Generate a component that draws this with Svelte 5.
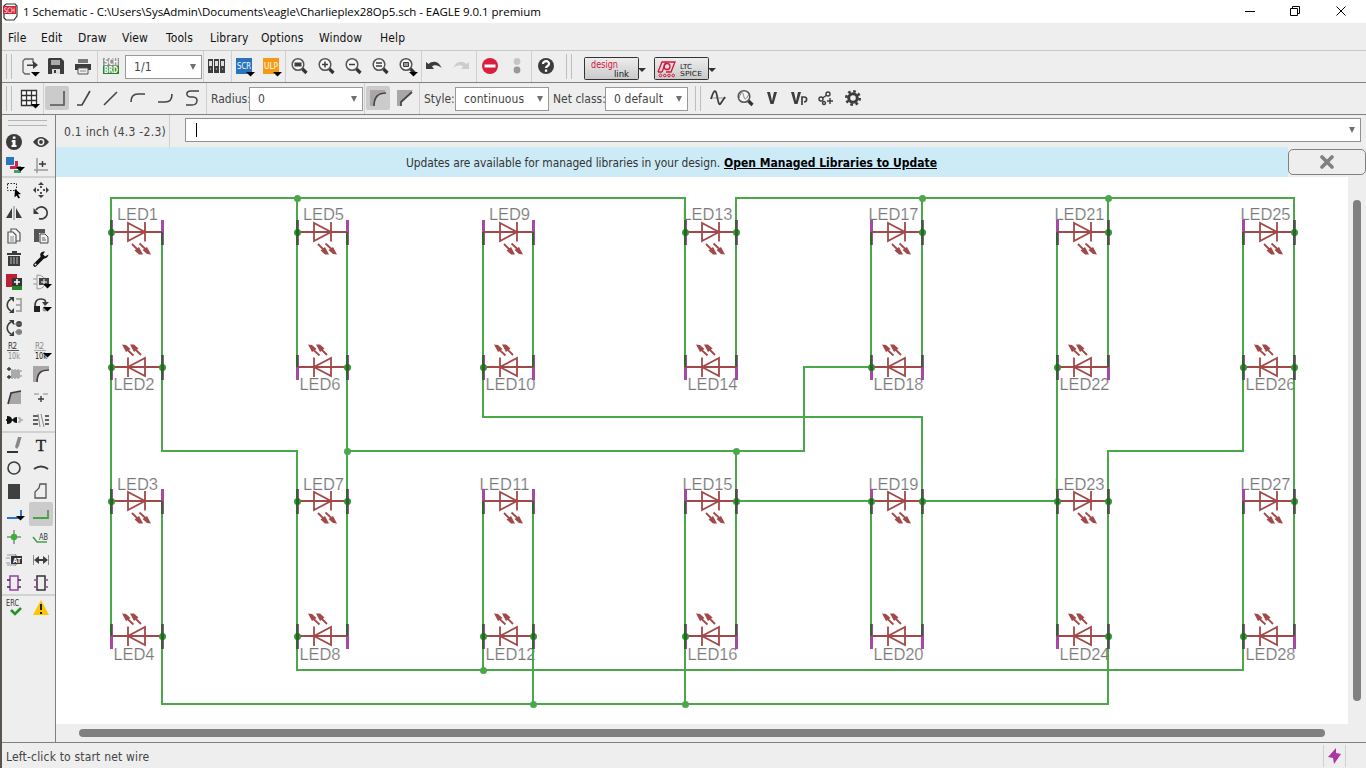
<script>
  const menus = [['File', 8, 17], ['Edit', 41, 21], ['Draw', 78, 27], ['View', 122, 27], ['Tools', 166, 29], ['Library', 210, 35], ['Options', 261, 43], ['Window', 319, 45], ['Help', 380, 24]];

  const arrow = '<path d="M-4 0h9l-4.5 4.500z" fill="#000"/>';
  const drop = (x, y) => `<g transform="translate(${x} ${y})">${arrow}</g>`;
  const lens = (inner) => `<circle cx="-1" cy="-1.500" r="5.800" fill="#f6f6f6" stroke="#555" stroke-width="1.500"/><path d="M3.500 3l4 4" stroke="#333" stroke-width="3.200"/>${inner}`;
  const K = '#3c3c3c';
  const tiny = 'font-family="DejaVu Sans Condensed" lengthAdjust="spacingAndGlyphs"';

  const icons = {
    export: `<path d="M3-3v-4h-8l-2 2v11l2 2h5" fill="none" stroke="#666" stroke-width="1.300"/><path d="M-3-1.500h6v-3.500l5 4-5 4v-3h-6z" fill="${K}"/>${drop(5, 6)}`,
    save: `<path d="M-7-8h12l3 3v13h-16v-15z" fill="${K}"/><path d="M-5-6h9v5h-9z" fill="#aaa"/><path d="M-4 3h8v5h-8z" fill="#ddd"/><path d="M-2 4h2v3h-2z" fill="${K}"/>`,
    print: `<path d="M-5-7h10v4h-10z" fill="#777"/><path d="M-8-2h16v6h-16z" fill="${K}"/><path d="M-5 2h10v6h-10z" fill="#eee" stroke="#555"/><path d="M-3 5h6" stroke="#888"/>`,
    schbrd: `<path d="M-8-8h16v8h-16z" fill="#8e918e"/><path d="M-8 0h16v8h-16z" fill="#278327"/><g fill="#fff" font-family="DejaVu Sans Condensed" font-size="8" font-weight="700"><text x="-7" y="-1.200" textLength="14" lengthAdjust="spacingAndGlyphs">SCH</text><text x="-7" y="7" textLength="14" lengthAdjust="spacingAndGlyphs">BRD</text></g>`,
    sheets: `<g fill="${K}"><path d="M-8-7h5v14h-5zM-2-7h5v14h-5zM4-7h5v14h-5z"/></g><g fill="#ddd"><path d="M-7-5h3v5h-3zM-1-5h3v5h-3zM5-5h3v5h-3z"/></g><path d="M-6 3h1M0 3h1M6 3h1" stroke="#ddd"/>`,
    scr: `<path d="M-8-8h16v16h-16z" fill="#2a74bd"/><text x="-7" y="3" textLength="14" ${tiny} font-size="9" fill="#fff">SCR</text>${drop(6, 6)}`,
    ulp: `<path d="M-8-8h16v16h-16z" fill="#f69a16"/><text x="-7" y="3" textLength="14" ${tiny} font-size="9" fill="#fff">ULP</text>${drop(6, 6)}`,
    fit: lens(`<path d="M-4.500-3.500h7v4h-7z" fill="${K}"/>`),
    zin: lens(`<path d="M-4-1.500h6M-1-4.500v6" stroke="${K}" stroke-width="1.500"/>`),
    zout: lens(`<path d="M-4-1.500h6" stroke="${K}" stroke-width="1.500"/>`),
    redraw: lens(`<path d="M-4-3h6M-4 0h6" stroke="${K}" stroke-width="1.500"/>`),
    zsel: lens(`<path d="M-3.500-3.500h5v4h-5z" fill="#999" stroke="${K}"/>`) + drop(6, 6),
    undo: `<path d="M-8 3V-4l2.500 2C-1-6 5-5 7.500 2 4-1.500 0-1.500-2 .5L0 3z" fill="${K}"/>`,
    redo: `<path d="M8 3V-4L5.500-2C1-6-5-5-7.500 2-4-1.500 0-1.500 2 .5L0 3z" fill="#ccc"/>`,
    stop: `<circle r="8" fill="#d91f3d"/><path d="M-5.500-1.500h11v3h-11z" fill="#fff"/>`,
    go: `<circle cy="-4.500" r="3.400" fill="#c5c5c5"/><circle cy="4" r="3.400" fill="#999"/>`,
    help: `<circle r="8" fill="${K}"/><path d="M-3-2C-3-6 3.500-5.500 3-2 3 0 0 0 0 2" fill="none" stroke="#fff" stroke-width="2.200"/><path d="M-1.100 3.500h2.300v2.300h-2.300z" fill="#fff"/>`,
    grid: `<path d="M-7.500-7.500h15v15h-15zM-7.500-2.500h15M-7.500 2.500h15M-2.500-7.500v15M2.500-7.500v15" fill="#fff" stroke="#333" stroke-width="1.300"/>${drop(6, 6)}`,
    w1: `<path d="M-7 7h14v-14" fill="none" stroke="#555" stroke-width="1.600"/>`,
    w2: `<path d="M-7 7h5l8-14" fill="none" stroke="#444" stroke-width="1.600"/>`,
    w3: `<path d="M-7 7l13-13" stroke="#444" stroke-width="1.600"/>`,
    w4: `<path d="M-7 4C-7-2-4-4 0-4h7" fill="none" stroke="#444" stroke-width="1.600"/>`,
    w5: `<path d="M-7 4h7C5 4 7 2 7-4" fill="none" stroke="#444" stroke-width="1.600"/>`,
    w6: `<path d="M7-7H-1C-7-7-6-1-1-1h2C7-1 6 7 0 7h-6" fill="none" stroke="#444" stroke-width="1.500"/>`,
    round: `<path d="M-8-8h15v2C0-5-5-1-5 8h-3z" fill="#aaa6a6"/><path d="M-4 8C-4-1 0-5 8-5" fill="none" stroke="#444" stroke-width="1.700"/>`,
    bevel: `<path d="M-8-8H8L-4 4v4h-4z" fill="#aaa6a6"/><path d="M-4 8V4L7-6" fill="none" stroke="#444" stroke-width="1.700"/>`,
    sine: `<path d="M-8 0h16" stroke="#999"/><path d="M-7 1C-4-9-2-9-1-2 0 3 1 9 3 5L7-1" fill="none" stroke="${K}" stroke-width="1.700"/>`,
    probe: lens(`<path d="M-6 0C-3-9-2-5-1-1 0 3 2 0 4-4" fill="none" stroke="#777"/>`),
    vv: `<path d="M-5-6h3L0 3l2-9h3L1.500 6h-3z" fill="${K}"/>`,
    vp: `<path d="M-8-6h3L-3 3l2-9h3L-1.500 6h-3z" fill="${K}"/><path d="M3 7v-8h2c4 0 3 5 0 5" fill="none" stroke="${K}" stroke-width="1.700"/>`,
    nodes: `<g fill="none" stroke="${K}" stroke-width="1.400"><circle cx="2" cy="-4" r="2"/><circle cx="-5" cy="1" r="2"/><circle cx="-2" cy="5" r="1.500"/><path d="M-3.500 0L1-3M1 3h6M4 0v6"/></g>`,
    gear: `<circle r="4.300" fill="none" stroke="${K}" stroke-width="3"/><circle r="6.700" fill="none" stroke="${K}" stroke-width="2.600" stroke-dasharray="2.630 2.630"/>`,

    info: `<circle r="8" fill="${K}"/><path d="M-2-2h3.500v5h1v2h-5v-2h1v-3h-1zM-1.200-5.500h2.700v2.300h-2.700z" fill="#fff"/>`,
    eye: `<path d="M-8 0Q0-10 8 0 0 10-8 0z" fill="${K}"/><circle r="3.400" fill="#eee"/><circle r="1.900" fill="${K}"/>`,
    layers: `<path d="M-8-8h8v8h-8z" fill="#2877bd"/><path d="M1-4h3v8h-8V1h5z" fill="#d2204f"/><path d="M4 1h3v7H0V5h4z" fill="#35a568"/>${drop(6, 2)}`,
    mark: `<path d="M-7 5H7M-4-7V8" stroke="#999" stroke-width="1.500"/><path d="M-2-1h7M1.500-4v6" stroke="${K}" stroke-width="1.500"/>`,
    group: `<path d="M-6.500-6.500h9v7h-9z" fill="none" stroke="#222" stroke-dasharray="1.500 1.500"/><path d="M1-1l6 5-3 .500 2 3-1.500 1-2-3-2 2z" fill="#000"/>`,
    move: `<g fill="${K}"><path d="M0-8l3 3h-6zM0 8l3-3h-6zM-8 0l3-3v6zM8 0l-3-3v6z"/></g><path d="M0-4v2M0 4v-2M-4 0h2M4 0h-2" stroke="#222" stroke-width="1.500"/>`,
    mirror: `<path d="M-2-5v10h-6zM2-5v10h6z" fill="${K}"/><path d="M0-7V7" stroke="#aaa" stroke-width="1.600"/>`,
    rotate: `<path d="M-5-3A6 6 0 1 1-2 5.500" fill="none" stroke="${K}" stroke-width="1.700"/><path d="M-7.500-5v6h5.500z" fill="${K}"/>`,
    copy: `<g fill="#f4f4f4" stroke="#555" stroke-width="1.200"><path d="M-3-7h5l4 4v8h-9z"/><path d="M-6-4h5l3 3v8h-8z"/></g><path d="M-4 1h4M-4 3h4M-4 5h4" stroke="#888"/>`,
    paste: `<path d="M-7-7h11v4h-6v9h-5z" fill="#555"/><path d="M-1-2h5l3 3v6h-8z" fill="#eee" stroke="#444"/><path d="M1 2h3M1 4h4" stroke="#666"/>`,
    trash: `<path d="M-7-6h14v2H-7zM-2-8h5v2h-5zM-6-3H6v10H-6z" fill="${K}"/><path d="M-3-2v7M0-2v7M3-2v7" stroke="#bbb"/>`,
    wrench: `<path d="M-6 6L2-2" stroke="#111" stroke-width="3.600" stroke-linecap="round"/><path d="M7.500-4.500C7-1 3 1 0-1.500-2-5 0-8 4-7.500L2-4.500l2 2z" fill="#111"/><circle cx="-5.500" cy="5.500" r="1" fill="#eee"/>`,
    add: `<path d="M-8-8h11v13H-8z" fill="#bd2034"/><path d="M-2 0H8v8H-2z" fill="#278327"/><path d="M-2-4H8v8H-2z" fill="#333"/><path d="M0 0h6M3-3v6" stroke="#fff" stroke-width="1.500"/>`,
    addgate: `<path d="M-8-3h4M-8 2h4M-4-7v14Q4 7 4 0T-4-7" fill="none" stroke="#999"/><path d="M-2-4H8v7H-2z" fill="#444"/><path d="M0 0h6M3-3v6" stroke="#fff"/>${drop(6, 2)}`,
    pins: `<path d="M7-7v14M2-6h5M2 0h5M2 6h5" fill="none" stroke="#999" stroke-width="1.500"/><path d="M-3-6C-8-3-8 3-3 6" fill="none" stroke="${K}" stroke-width="1.600"/><path d="M-5-8h5v5zM-5 8h5V3z" fill="${K}"/>`,
    gates: `<path d="M-6 1Q-6-6 0-6t4 5" fill="none" stroke="${K}" stroke-width="1.700"/><path d="M1-3h7L4 1z" fill="${K}"/><path d="M-7 1h6v6h-6z" fill="#222"/><circle cx="4" cy="4" r="2.500" fill="#999"/>${drop(6, 2)}`,
    swap: `<path d="M-3-6C-8-3-8 3-3 6" fill="none" stroke="${K}" stroke-width="1.600"/><path d="M-5-8h5v5zM-5 8h5V3z" fill="${K}"/><circle cx="5" cy="-4" r="3" fill="#444"/><circle cx="5" cy="4" r="3" fill="#888"/><path d="M0-4h8M1 4h7" stroke="#777"/>`,
    name: `<path d="M-7-.5h12" stroke="#555"/><g font-family="DejaVu Sans Condensed" font-size="8"><text x="-6" y="-2" fill="#333" textLength="9">R2</text><text x="-6" y="8" fill="#888" textLength="12" lengthAdjust="spacingAndGlyphs">10k</text></g>`,
    value: `<path d="M-7-.5h12" stroke="#aaa"/><g font-family="DejaVu Sans Condensed" font-size="8"><text x="-6" y="-2" fill="#888" textLength="9">R2</text><text x="-6" y="8" fill="#111" textLength="12" lengthAdjust="spacingAndGlyphs">10k</text></g>${drop(6, 2)}`,
    smash: `<path d="M-3-4H6v8h-9z" fill="#aaa"/><path d="M-2-5v10M1-5v10M4-5v10M6-3h2M6 2h2" stroke="#aaa" stroke-width="1.500"/><path d="M-7-5h4M-5-7v4M-7 3h4M-5 1v4" stroke="#333" stroke-width="1.300"/>`,
    miter: `<path d="M-8-8H8v3C1-5-5-1-5 8h-3z" fill="#aaa6a6"/><path d="M-4 8C-4-1 0-4 8-4" fill="none" stroke="${K}" stroke-width="1.700"/>`,
    split: `<path d="M-6 7l3-11L7-6v13z" fill="#aaa6a6"/><path d="M-6 7l3-11L7-6" fill="none" stroke="${K}" stroke-width="1.700"/>`,
    optimize: `<path d="M-7-3h5M2-3h5" stroke="#aaa" stroke-width="1.400"/><path d="M-3 2h6M0-1v6" stroke="${K}" stroke-width="1.400"/>`,
    invoke: `<path d="M-7-4q5 0 5 4 0 4-5 4z" fill="#111"/><path d="M-8 0H3" stroke="#111" stroke-width="1.700"/><path d="M3-3v6q-4 0-4-3t4-3" fill="#111"/><path d="M4-2h2v4h-2M6 0h3" fill="none" stroke="#aaa" stroke-width="1.500"/>`,
    brk: `<path d="M-8-4h5M-8 0h5M-8 4h5M4-4h4M4 0h4M4 4h4" stroke="#333" stroke-width="1.400"/><path d="M-3-6l2 13M0-6l3 13" stroke="#888"/>`,
    line: `<path d="M-7 7H4" stroke="#111" stroke-width="1.700"/><path d="M4-8h3.500L5 1 3 4 1 2z" fill="#888"/>`,
    text: `<text y="6" text-anchor="middle" font-family="Liberation Serif" font-size="17" fill="#222" stroke="#222" stroke-width=".300">T</text>`,
    circle: `<circle r="6" fill="none" stroke="${K}" stroke-width="1.600"/>`,
    arc: `<path d="M-7 1Q0-4 7 1" fill="none" stroke="${K}" stroke-width="2"/>`,
    rect: `<path d="M-6-7H6V8H-6z" fill="#404040"/>`,
    poly: `<path d="M-1-7H5V7H-6V1L-2-3z" fill="none" stroke="#555" stroke-width="1.300"/>`,
    bus: `<path d="M-7 4H7V-4" fill="none" stroke="#2675c6" stroke-width="1.900"/>${drop(6, 2)}`,
    net: `<path d="M-8 4H7V-4" fill="none" stroke="#43a443" stroke-width="1.800"/>`,
    junction: `<path d="M-7 0H7M0-7V7" stroke="#888" stroke-width="1.500"/><circle r="3.200" fill="#35b335"/>`,
    label: `<path d="M-8 0l4 5H6" fill="none" stroke="#43a443" stroke-width="1.600"/><text x="-2" y="3" ${tiny} font-size="8.500" fill="#333" textLength="9">AB</text>`,
    attr: `<path d="M-7-5h9v10h-9M-8-2h4M-8 3h4M1-6q6 6 0 12" fill="none" stroke="#999"/><path d="M-3-4H8v8H-3z" fill="#333"/><text x="-1" y="3" ${tiny} textLength="8" font-weight="700" font-size="7" fill="#fff">AT</text>`,
    dim: `<path d="M-7.500-5V5M7.500-5V5" stroke="#888"/><path d="M-5 0H5" stroke="${K}" stroke-width="2"/><path d="M-7 0l5-4v8zM7 0l-5-4v8z" fill="${K}"/>`,
    mod: `<path d="M-4-7H4V7H-4z" fill="none" stroke="#9a3fa5" stroke-width="1.500"/><path d="M-7-3h3M-7 4h3M4-3h3M4 4h3" stroke="#333" stroke-width="1.300"/>`,
    port: `<path d="M-4-7H4V7H-4z" fill="none" stroke="#333" stroke-width="1.500"/><path d="M-7-3h3M-7 4h3M4-3h3M4 4h3" stroke="#9a3fa5" stroke-width="1.300"/>`,
    erc: `<text x="-8" y="-2" ${tiny} font-size="8.500" fill="#333" textLength="13">ERC</text><path d="M-3 2l4 4 6-6" fill="none" stroke="#279327" stroke-width="2.600"/>`,
    warn: `<path d="M0-8L8 7H-8z" fill="#ffc400"/><path d="M0-4v6M0 4v2" stroke="#222" stroke-width="2"/>`
  };

  const flow = (items, start) => {
    let end = start;
    return items.map((i) => {
      const w = { icon: 24, sep: 1, grip: 6 }[i[0]] ?? i[3];
      const gap = i[1] - end;
      end = i[1] + w;
      return { kind: i[0], gap, w, v: i[2] };
    });
  };
  const icon = (center, name) => ['icon', center - 12, name];

  const bar1 = flow([['grip', 6], icon(30, 'export'), icon(56, 'save'), icon(83, 'print'), ['sep', 97], icon(111, 'schbrd'), ['combo', 125, '1/1', 77], ['sep', 203], icon(216, 'sheets'), ['sep', 231], icon(244, 'scr'), icon(271, 'ulp'), ['sep', 285], icon(299, 'fit'), icon(326, 'zin'), icon(353, 'zout'), icon(380, 'redraw'), icon(407, 'zsel'), ['sep', 421], icon(434, 'undo'), icon(461, 'redo'), ['sep', 476], icon(490, 'stop'), icon(517, 'go'), ['sep', 531], icon(546, 'help'), ['grip', 566], ['design', 584, '', 62], ['spice', 654, '', 62]], 2);
  const bar2 = flow([['grip', 6], icon(29, 'grid'), ['sep', 43], icon(57, 'w1'), icon(84, 'w2'), icon(111, 'w3'), icon(138, 'w4'), icon(165, 'w5'), icon(192, 'w6'), ['sep', 206], ['text', 211, 'Radius:', 38], ['combo', 249, '0', 114], ['sep', 364], icon(378, 'round'), icon(405, 'bevel'), ['sep', 419], ['text', 424, 'Style:', 31], ['combo', 455, 'continuous', 94], ['text', 553, 'Net class:', 52], ['combo', 605, '0 default', 83], ['grip', 695], icon(718, 'sine'), icon(745, 'probe'), icon(772, 'vv'), icon(799, 'vp'), icon(826, 'nodes'), icon(853, 'gear')], 2);

  const palette = [
    ['info', 'eye', 'layers', 'mark'],
    ['group', 'move', 'mirror', 'rotate', 'copy', 'paste', 'trash', 'wrench', 'add', 'addgate', 'pins', 'gates', 'swap', '', 'name', 'value', 'smash', 'miter', 'split', 'optimize', 'invoke', 'brk'],
    ['line', 'text', 'circle', 'arc', 'rect', 'poly', 'bus', 'net', 'junction', 'label', 'attr', 'dim', 'mod', 'port'],
    ['erc', 'warn']
  ];
  const active = ['w1', 'round', 'net'];

  const cols = [[111, 162], [297, 347], [483, 533], [685, 736], [871, 922], [1057, 1108], [1243, 1294]];
  const rows = [232, 367, 501, 636];
  const leds = cols.flatMap(([l, r], c) =>
    rows.map((y, i) => {
      const n = c * 4 + i + 1;
      const up = i % 2 === 1;
      const two = n > 9;
      return { n, l, r, y, up, tx: up ? l + 2.5 : two ? r - 53.5 : l + 6, ty: [220, 390, 490, 660][i], tl: two ? 50 : 41 };
    })
  );
  const wires = 'M111 636V198H685V367M297 198V367M162 232V451H297V670H1243V501M347 232V636M347 451H804V367H871M736 451V636M736 501H871M922 501H1057M483 232V417H922V636M533 232V367M483 501V670M533 501V704M162 501V704H1108V451H1243V232M685 501V704M736 367V198H1294V636M871 232V367M922 198V367M1108 198V367M1057 232V636M871 501V636';
  const nodes = [[297, 198], [922, 198], [1108, 198], [347, 451], [736, 451], [483, 670], [533, 704], [685, 704]];
  const pinNodes = [[111, 232], [111, 367], [162, 367], [111, 501], [162, 636], [297, 232], [347, 367], [297, 501], [347, 501], [297, 636], [483, 367], [483, 636], [533, 636], [685, 232], [736, 232], [736, 501], [685, 636], [922, 232], [871, 367], [871, 501], [922, 501], [1108, 232], [1057, 367], [1057, 501], [1108, 501], [1108, 636], [1294, 232], [1243, 367], [1294, 367], [1294, 501], [1243, 636]];
</script>

{#snippet glyph(name)}
  <svg class="icon" class:active={active.includes(name)} viewBox="-12 -12 24 24">{@html icons[name] ?? ''}</svg>
{/snippet}

{#snippet toolbar(items)}
  <div class="toolbar">
    {#each items as it}
      <div class="item {it.kind}" style="margin-left:{it.gap}px;width:{it.w}px">
        {#if it.kind === 'icon'}
          {@render glyph(it.v)}
        {:else if it.kind === 'combo'}
          <span>{it.v}</span><i class="caret"></i>
        {:else if it.kind === 'text'}
          {it.v}
        {:else if it.kind === 'design' || it.kind === 'spice'}
          <svg width="62" height="24" viewBox="0 0 62 24">
            <defs><linearGradient id="face" x2="0" y2="1"><stop stop-color="#eee" /><stop offset="1" stop-color="#c9c9c9" /></linearGradient></defs>
            <rect x=".5" y=".5" width="54" height="22" rx="1" fill="url(#face)" stroke="#333" />
            <path d="M54 11h8l-4 4z" fill="#333" />
            {#if it.kind === 'design'}
              <text x="7" y="11" font-size="10" fill="#d8143c" textLength="27" lengthAdjust="spacingAndGlyphs">design</text>
              <text x="30" y="20" font-size="8" fill="#111" textLength="15" lengthAdjust="spacingAndGlyphs">link</text>
            {:else}
              <path d="M4 15L8 5h13l-4 10h-5M8 15l4-10M4 15h4" fill="none" stroke="#d8143c" stroke-width="1.300" />
              <circle cx="13" cy="9.500" r="3" fill="none" stroke="#d8143c" stroke-width="1.300" />
              <g fill="none" stroke="#d8143c"><circle cx="6.500" cy="18.500" r="1.300" /><circle cx="10.800" cy="18.500" r="1.300" /><circle cx="15" cy="18.500" r="1.300" /><circle cx="19.200" cy="18.500" r="1.300" /></g>
              <text x="26" y="11.500" font-size="7" fill="#222" textLength="12" lengthAdjust="spacingAndGlyphs">LTC</text>
              <text x="26" y="19" font-size="7" fill="#222" textLength="22" lengthAdjust="spacingAndGlyphs">SPICE</text>
            {/if}
          </svg>
        {/if}
      </div>
    {/each}
  </div>
{/snippet}

<div class="window">
  <header class="title">
    <svg class="app" width="16" height="18" viewBox="0 0 16 18">
      <path d="M3 1h9l2 2v10l-3 4H3l-2-2V3z" fill="#fff" stroke="#333" stroke-width="1.200" />
      <path d="M0 3h13v8H0z" fill="#d3202f" />
      <text x="1" y="10" font-size="7.500" fill="#fff" textLength="11" lengthAdjust="spacingAndGlyphs">SCH</text>
    </svg>
    <span class="caption">1 Schematic - C:\Users\SysAdmin\Documents\eagle\Charlieplex28Op5.sch - EAGLE 9.0.1 premium</span>
    <svg class="controls" width="110" height="22" viewBox="1240 0 110 22" fill="none" stroke="#000">
      <path d="M1245 10.500h10M1290.500 7.500h7v7h-7zM1292.500 7.500v-2h7v7h-2M1336.500 5.500l9 9M1345.500 5.500l-9 9" />
    </svg>
  </header>

  <nav>
    {#each menus as m, i}
      <span style="margin-left:{m[1] - (i ? menus[i - 1][1] + menus[i - 1][2] : 2)}px;width:{m[2]}px">{m[0]}</span>
    {/each}
  </nav>

  {@render toolbar(bar1)}
  {@render toolbar(bar2)}

  <main>
    <aside>
      <div class="hgrip"></div>
      {#each palette as section}
        <div class="tools">
          {#each section as name}{@render glyph(name)}{/each}
        </div>
      {/each}
    </aside>
    <section>
      <div class="params">
        <span class="coords">0.1 inch (4.3 -2.3)</span>
        <div class="command"><b></b><i class="caret"></i></div>
      </div>
      <div class="notice">
        <p><span class="msg">Updates are available for managed libraries in your design.</span><a href="#update">Open Managed Libraries to Update</a></p>
        <button aria-label="Close"><svg width="16" height="14" viewBox="0 0 16 14"><path d="M3 2l10 10M13 2L3 12" stroke="#808080" stroke-width="3.600" stroke-linecap="round" /></svg></button>
      </div>
      <div class="work">
        <svg class="sheet" width="1292" height="547" viewBox="56 177 1292 547">
          <defs>
            <clipPath id="pins">
              {#each leds as d}
                <rect x={d.l - 1} y={d.y - 12} width="3" height="25" /><rect x={d.r - 1} y={d.y - 12} width="3" height="25" />
              {/each}
            </clipPath>
          </defs>
          {#each leds as d}
            <text x={d.tx} y={d.ty} textLength={d.tl}>LED{d.n}</text>
            <g fill="#a549a5"><rect x={d.l - 1} y={d.y - 12} width="3" height="25" /><rect x={d.r - 1} y={d.y - 12} width="3" height="25" /></g>
            <path d="M{d.l} {d.y}H{d.r}" stroke="#a34848" stroke-width="2" />
            <g transform="translate({d.l + 25.5} {d.y}){d.up ? ' rotate(180)' : ''}" stroke="#a34848" stroke-width="1.8" fill="none">
              <path d="M-8.500-9V9L8.500 0zM8.500-10V9.500M-4.500 12L2 18.500M3 11.500L9.500 17.500" />
              <path d="M6.500 22.500L2.500 22.500-2 18.500 2.500 15zM14.500 22.500L10.500 22 6 18 10.500 15z" fill="#a34848" stroke="none" />
            </g>
          {/each}
          <path d={wires} fill="none" stroke="#4aa84a" stroke-width="2" />
          {#each nodes as [x, y]}<circle cx={x + 0.5} cy={y + 0.5} r="3.500" fill="#4aa84a" />{/each}
          {#each pinNodes as [x, y]}<circle cx={x + 0.5} cy={y + 0.5} r="3.500" fill="#379437" />{/each}
          <g clip-path="url(#pins)">
            <path d={wires} fill="none" stroke="#2c672c" stroke-width="2" />
            {#each pinNodes as [x, y]}<circle cx={x + 0.5} cy={y + 0.5} r="3.500" fill="#236823" />{/each}
          </g>
        </svg>
        <div class="vscroll"></div>
      </div>
      <div class="hscroll"></div>
    </section>
  </main>

  <footer>
    <span>Left-click to start net wire</span>
    <div class="live"><svg width="14" height="18" viewBox="0 0 14 18"><path d="M8 1L0 10l5 1 1 6 7-10-5-1z" fill="#ab35a9" /></svg></div>
  </footer>
</div>

<style>
  :global(body) { overflow: hidden; }
  .window { box-sizing: border-box; width: 1366px; height: 768px; border-left: 2px solid #5a544e; background: #eee; color: #222; display: flex; flex-direction: column; font: 12px/16px "DejaVu Sans Condensed", "Noto Sans", sans-serif; white-space: nowrap; }
  .title { height: 23px; background: #fff; display: flex; align-items: center; }
  .app { margin-left: 1px; flex: none; }
  .caption { margin-left: 4px; font: 11.5px/20px "Open Sans", sans-serif; letter-spacing: -.03px; color: #000; }
  .controls { margin-left: auto; margin-right: 16px; }
  nav { box-sizing: border-box; height: 28px; padding-top: 2px; display: flex; align-items: center; border-bottom: 1px solid #c8c8c8; color: #111; letter-spacing: .12px; }
  nav span { flex: none; }
  .toolbar { height: 31px; border-bottom: 1px solid #808080; display: flex; align-items: center; }
  .item { flex: none; box-sizing: border-box; color: #444; }
  .item.icon { height: 24px; margin-top: -1px; }
  .icon { display: block; width: 24px; height: 24px; overflow: visible; }
  .icon.active { background: #cbcbcb; border-radius: 2px; }
  .sep { height: 31px; background: #cfcfcf; }
  .grip { height: 25px; border: solid #bdbdbd; border-width: 0 1px; }
  .combo { height: 24px; border: 1px solid #999; background: #fff; display: flex; align-items: center; padding: 0 5px 0 8px; justify-content: space-between; letter-spacing: .08px; }
  .caret { border: 3.5px solid transparent; border-top: 6px solid #707070; border-bottom: 0; }
  .design, .spice { height: 24px; margin-top: 5px; font-family: "DejaVu Sans Condensed", sans-serif; }
  main { height: 627px; display: flex; border-bottom: 1px solid #808080; }
  aside { width: 53px; border-right: 1px solid #808080; }
  .hgrip { margin: 5px 8px 0 6px; height: 4px; border: solid #b5b5b5; border-width: 1px 0; }
  .hgrip + .tools { margin-top: 4px; border: 0; }
  .tools { display: grid; grid-template-columns: 24px 24px; column-gap: 3px; grid-auto-rows: 23px; border-top: 2px solid #d2d2d2; }
  section { width: 1310px; display: flex; flex-direction: column; }
  .params { height: 32px; display: flex; }
  .coords { box-sizing: border-box; width: 114px; padding: 9px 0 0 8px; border-right: 1px solid #cfcfcf; color: #444; letter-spacing: .28px; }
  .command { box-sizing: border-box; width: 1176px; height: 24px; margin: 3px 0 0 15px; border: 1px solid #909090; background: #fff; display: flex; justify-content: space-between; align-items: center; padding: 0 5px 0 10px; }
  .command b { width: 1px; height: 14px; background: #000; }
  .notice { height: 30px; display: flex; align-items: center; }
  .notice p { margin: 0; width: 1232px; height: 30px; line-height: 32px; background: #cdebf7; box-sizing: border-box; padding-left: 350px; display: flex; }
  .msg { width: 318px; color: #333; font-size: 11.9px; letter-spacing: -.07px; }
  a { color: #000; font-weight: 700; }
  button { width: 78px; height: 26px; border: 1px solid #808080; border-radius: 5px; background: #eee; padding: 0; display: flex; align-items: center; justify-content: center; }
  .work { display: flex; height: 547px; }
  .sheet { background: #fff; flex: none; }
  .sheet text { font: 16.5px "Liberation Sans", sans-serif; fill: #777; stroke: #fff; stroke-width: .2px; }
  .vscroll { width: 8px; height: 501px; margin: 23px 0 0 5px; border-radius: 4px; background: #808080; }
  .hscroll { width: 1246px; height: 8px; margin: 5px 0 0 23px; border-radius: 4px; background: #808080; }
  footer { height: 25px; display: flex; align-items: center; justify-content: space-between; color: #444; }
  footer span { margin-left: 4px; padding-top: 3px; letter-spacing: .18px; }
  .live { width: 21px; height: 22px; margin-right: 20px; border: solid #cfcfcf; border-width: 0 1px; display: flex; align-items: center; justify-content: center; }
</style>
